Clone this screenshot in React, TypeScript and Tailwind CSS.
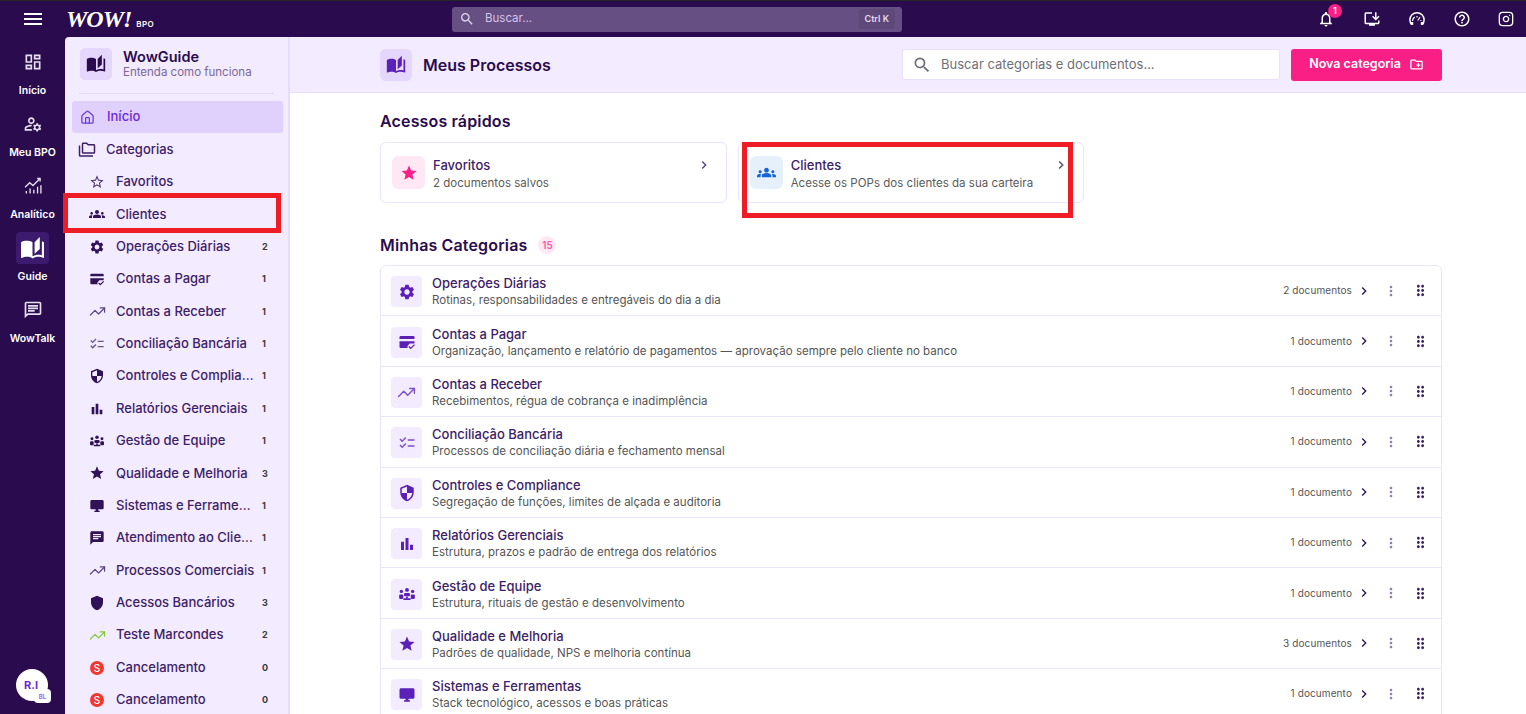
import React from "react";
import type { IconType } from "react-icons";
import {
  MdAutoStories,
  MdBarChart,
  MdChat,
  MdChevronRight,
  MdChecklist,
  MdDesktopWindows,
  MdDragIndicator,
  MdGroups,
  MdHelpOutline,
  MdMenu,
  MdMoreVert,
  MdOutlineChat,
  MdOutlineCreateNewFolder,
  MdOutlineDashboard,
  MdOutlineFolderCopy,
  MdOutlineInstallDesktop,
  MdOutlineManageAccounts,
  MdOutlineNotifications,
  MdSearch,
  MdSecurity,
  MdSettings,
  MdShield,
  MdStar,
  MdStarBorder,
} from "react-icons/md";
import { LuHouse, LuInstagram, LuTrendingUp } from "react-icons/lu";

type IconProps = { size?: number; className?: string };
type AnyIcon = IconType | ((p: IconProps) => React.ReactElement);

const font = { fontFamily: "Inter, 'Noto Sans', sans-serif" };

function CancelIcon() {
  return (
    <span className="flex h-[14px] w-[14px] items-center justify-center rounded-full bg-[#f4362c] text-[10px] leading-none font-medium text-white">
      S
    </span>
  );
}

// thin trend line, the md one is too heavy here
function ThinTrend({ size = 16, className }: IconProps) {
  return <LuTrendingUp size={size + 1} strokeWidth={1.7} className={className} />;
}

function CardCheckIcon({ size = 16, className }: IconProps) {
  return (
    <svg width={size} height={size} viewBox="0 0 24 24" fill="currentColor" className={className}>
      <path d="M3.5 4h17A1.5 1.5 0 0 1 22 5.5V8H2V5.5A1.5 1.5 0 0 1 3.5 4z" />
      <path d="M2 11h20v3h-6.5l-3 3.5L13 20H3.5A1.5 1.5 0 0 1 2 18.5z" />
      <path d="M14.5 18l2.5 2.5 5-5" fill="none" stroke="currentColor" strokeWidth="1.8" />
    </svg>
  );
}

function TeamIcon({ size = 16, className }: IconProps) {
  return (
    <svg width={size} height={size} viewBox="0 0 24 24" fill="currentColor" className={className}>
      <circle cx="12" cy="6.5" r="2.6" />
      <circle cx="4.5" cy="8.5" r="2.2" />
      <circle cx="19.5" cy="8.5" r="2.2" />
      <rect x="8" y="10.5" width="8" height="4.5" rx="1.8" />
      <circle cx="12" cy="16.8" r="1.4" />
      <rect x="1.5" y="12.5" width="5.5" height="6" rx="1.6" />
      <rect x="17" y="12.5" width="5.5" height="6" rx="1.6" />
      <rect x="7" y="17.5" width="10" height="2.5" rx="1" />
    </svg>
  );
}

function AnalyticIcon({ size = 20, className }: IconProps) {
  return (
    <svg width={size} height={size} viewBox="0 0 24 24" fill="none" stroke="currentColor" strokeWidth="1.6" className={className}>
      <path d="M2.5 13.5 8 8l4 3.5L20.5 3" />
      <path d="M17 3h3.5v3.5" />
      <path d="M4 21v-3M8.5 21v-6M13 21v-4.5M17.5 21v-8M21.5 21V11" />
    </svg>
  );
}

function GaugeIcon({ size = 18, className }: IconProps) {
  return (
    <svg width={size} height={size} viewBox="0 0 24 24" fill="none" stroke="currentColor" strokeWidth="2" className={className}>
      <path d="M5 19.5A10 10 0 0 1 2.5 13a9.5 9.5 0 0 1 19 0 10 10 0 0 1-2.5 6.5" />
      <path d="M6 14.5a6 6 0 0 1 3-5" strokeWidth="1.6" />
      <path d="M12 8v2M16 9.5l-1 1.5M18 14h-1.5M13 14l2-3" strokeWidth="1.6" />
      <rect x="3.5" y="16" width="3.5" height="4" rx="1" fill="currentColor" stroke="none" />
      <rect x="17" y="16" width="3.5" height="4" rx="1" fill="currentColor" stroke="none" />
    </svg>
  );
}

const railItems = [
  { label: "Início", icon: MdOutlineDashboard as AnyIcon },
  { label: "Meu BPO", icon: MdOutlineManageAccounts as AnyIcon },
  { label: "Analítico", icon: AnalyticIcon as AnyIcon },
  { label: "Guide", icon: MdAutoStories as AnyIcon, active: true },
  { label: "WowTalk", icon: MdOutlineChat as AnyIcon },
];

type SideItem = { label: string; icon: AnyIcon; count?: number; tone?: string };

const sideItems: SideItem[] = [
  { label: "Favoritos", icon: MdStarBorder, tone: "text-[#4b3570]" },
  { label: "Clientes", icon: MdGroups },
  { label: "Operações Diárias", icon: MdSettings, count: 2 },
  { label: "Contas a Pagar", icon: CardCheckIcon, count: 1 },
  { label: "Contas a Receber", icon: ThinTrend, count: 1, tone: "text-[#5a4580]" },
  { label: "Conciliação Bancária", icon: MdChecklist, count: 1, tone: "text-[#6a5590]" },
  { label: "Controles e Compliance", icon: MdSecurity, count: 1 },
  { label: "Relatórios Gerenciais", icon: MdBarChart, count: 1 },
  { label: "Gestão de Equipe", icon: TeamIcon, count: 1 },
  { label: "Qualidade e Melhoria", icon: MdStar, count: 3 },
  { label: "Sistemas e Ferramentas", icon: MdDesktopWindows, count: 1 },
  { label: "Atendimento ao Cliente", icon: MdChat, count: 1 },
  { label: "Processos Comerciais", icon: ThinTrend, count: 1, tone: "text-[#5a4580]" },
  { label: "Acessos Bancários", icon: MdShield, count: 3 },
  { label: "Teste Marcondes", icon: ThinTrend, count: 2, tone: "text-[#84cc3d]" },
  { label: "Cancelamento", icon: CancelIcon, count: 0 },
  { label: "Cancelamento", icon: CancelIcon, count: 0 },
];

const categories: { title: string; sub: string; docs: string; icon: AnyIcon; tone?: string }[] = [
  { title: "Operações Diárias", sub: "Rotinas, responsabilidades e entregáveis do dia a dia", docs: "2 documentos", icon: MdSettings },
  { title: "Contas a Pagar", sub: "Organização, lançamento e relatório de pagamentos — aprovação sempre pelo cliente no banco", docs: "1 documento", icon: CardCheckIcon },
  { title: "Contas a Receber", sub: "Recebimentos, régua de cobrança e inadimplência", docs: "1 documento", icon: ThinTrend, tone: "text-[#7c4fd0]" },
  { title: "Conciliação Bancária", sub: "Processos de conciliação diária e fechamento mensal", docs: "1 documento", icon: MdChecklist, tone: "text-[#7c4fd0]" },
  { title: "Controles e Compliance", sub: "Segregação de funções, limites de alçada e auditoria", docs: "1 documento", icon: MdSecurity },
  { title: "Relatórios Gerenciais", sub: "Estrutura, prazos e padrão de entrega dos relatórios", docs: "1 documento", icon: MdBarChart },
  { title: "Gestão de Equipe", sub: "Estrutura, rituais de gestão e desenvolvimento", docs: "1 documento", icon: TeamIcon },
  { title: "Qualidade e Melhoria", sub: "Padrões de qualidade, NPS e melhoria contínua", docs: "3 documentos", icon: MdStar },
  { title: "Sistemas e Ferramentas", sub: "Stack tecnológico, acessos e boas práticas", docs: "1 documento", icon: MdDesktopWindows },
];

function TopBar() {
  return (
    <header className="flex h-[37px] shrink-0 items-center border-t border-[#262626] bg-[#2a0c4e] text-white">
      <div className="flex w-[65px] justify-center">
        <MdMenu size={24} />
      </div>
      <div className="flex w-[387px] items-baseline pl-[1px]">
        <span className="text-[24px] leading-none font-bold tracking-[-1px] italic" style={{ fontFamily: "'Liberation Serif', serif" }}>
          WOW!
        </span>
        <span className="ml-[5px] text-[8px] font-semibold tracking-[0.4px]">BPO</span>
      </div>
      <div className="flex h-[25px] w-[450px] items-center rounded-[3px] bg-[#664f82] pr-[7px] pl-[7px]">
        <MdSearch size={16} className="text-[#e0d5ee]" />
        <span className="ml-[10px] flex-1 text-[11.5px] text-[#d5c3ee]">Buscar...</span>
        <span className="rounded-[3px] bg-[#5e4779] px-[6px] py-[3px] text-[9px] font-semibold text-[#e3d9ef]">Ctrl K</span>
      </div>
      <div className="ml-auto flex items-center gap-[27px] pr-[12px]">
        <div className="relative -translate-x-[1px]">
          <MdOutlineNotifications size={18} />
          <span className="absolute top-[-6px] left-[11px] flex h-[14px] w-[14px] items-center justify-center rounded-full bg-[#f91f85] text-[9px] font-semibold">
            1
          </span>
        </div>
        <MdOutlineInstallDesktop size={18} />
        <GaugeIcon size={18} />
        <MdHelpOutline size={18} />
        <LuInstagram size={16} />
      </div>
    </header>
  );
}

function Rail() {
  return (
    <nav className="relative flex w-[65px] shrink-0 flex-col items-center bg-[#2a0c4e] pt-[9px] text-white">
      {railItems.map((item) => {
        const Icon = item.icon;
        return (
          <div key={item.label} className="flex h-[62px] w-full shrink-0 flex-col items-center">
            <div className={`flex h-[32px] w-[33px] items-center justify-center rounded-[4px] ${item.active ? "bg-[#3c1a6e]" : ""}`}>
              <Icon size={item.active ? 25 : 20} className={item.active ? "text-white" : "text-[#e6e0ee]"} />
            </div>
            <span className="mt-[6px] text-[10.5px] leading-[14px] font-semibold">{item.label}</span>
          </div>
        );
      })}
      <div className="absolute bottom-[13px] left-[16px] flex h-[32px] w-[32px] items-center justify-center rounded-full bg-white pr-[2px]">
        <span className="text-[11px] font-bold text-[#6d28d9]">R.I</span>
        <span className="absolute right-[-3px] bottom-[-2px] flex h-[14px] w-[17px] items-center justify-center rounded-[4px] bg-white text-[6px] font-semibold text-[#8b5cf6]">
          BL
        </span>
      </div>
    </nav>
  );
}

function Sidebar() {
  return (
    <aside className="flex w-[225px] shrink-0 flex-col overflow-hidden rounded-tl-[4px] border-r-2 border-[#e6dcfb] bg-[#f3ebff] text-[#3d2166]">
      <div className="mx-[14px] flex h-[57px] shrink-0 items-center gap-[11px] border-b border-[#e4daf6] pt-[2px] pb-[4px] pl-[1px]">
        <div className="flex h-[32px] w-[32px] items-center justify-center rounded-[5px] bg-[#e4d6fc]">
          <MdAutoStories size={20} className="text-[#2a0c4e]" />
        </div>
        <div>
          <div className="text-[14.5px] leading-[17px] font-semibold text-[#2a0c4e]">WowGuide</div>
          <div className="text-[11.5px] leading-[15px] text-[#7a6896]">Entenda como funciona</div>
        </div>
      </div>
      <div className="mt-[7px] pr-[5px] pl-[7px]">
        <div className="flex h-[32.4px] items-center rounded-[3px] bg-[#e0d0fc] pl-[8px] text-[#6d28d9]">
          <LuHouse size={15} className="text-[#6d3bd0]" />
          <span className="ml-[12px] text-[13px] font-medium">Início</span>
        </div>
        <div className="flex h-[32.4px] items-center pl-[6px]">
          <MdOutlineFolderCopy size={18} />
          <span className="ml-[10px] text-[13px] font-medium">Categorias</span>
        </div>
        {sideItems.map((item, i) => {
          const Icon = item.icon;
          return (
            <div key={item.label + i} className="flex h-[32.375px] items-center">
              <div className={`flex w-[37px] justify-center pl-[13px] ${item.tone ?? "text-[#2f1257]"}`}>
                <Icon size={16} />
              </div>
              <span className="ml-[7px] w-[140px] truncate text-[13px] font-medium">{item.label}</span>
              {item.count !== undefined && <span className="ml-[6px] text-[9px] font-bold text-[#3a3a3a]">{item.count}</span>}
            </div>
          );
        })}
      </div>
    </aside>
  );
}

function QuickCard({ title, sub, tint, children }: { title: string; sub: string; tint: string; children: React.ReactNode }) {
  return (
    <div className="flex h-[61px] items-center rounded-[6px] border border-[#ece3fd] bg-white pr-[14px] pl-[11px]">
      <div className={`flex h-[33px] w-[33px] items-center justify-center rounded-[6px] ${tint}`}>{children}</div>
      <div className="ml-[8px] flex-1 pt-[4px]">
        <div className="text-[13px] leading-[17px] font-medium text-[#3d2166]">{title}</div>
        <div className="text-[11.5px] leading-[19px] tracking-[0.02px] text-[#5a5a5a]">{sub}</div>
      </div>
      <MdChevronRight size={16} className="mb-[15px] text-[#55427a]" />
    </div>
  );
}

function CategoryRow({ title, sub, docs, icon: Icon, tone }: { title: string; sub: string; docs: string; icon: AnyIcon; tone?: string }) {
  return (
    <div className="flex h-[50.4px] items-center border-b border-[#ece3fd] pt-[2px] pr-[12px] pl-[10px]">
      <div className="flex h-[31px] w-[31px] items-center justify-center rounded-[4px] bg-[#f3ebff]">
        <Icon size={18} className={tone ?? "text-[#5b21b6]"} />
      </div>
      <div className="ml-[10px] flex-1">
        <div className="text-[13px] leading-[17px] font-medium text-[#3d2166]">{title}</div>
        <div className="text-[11.5px] leading-[16px] tracking-[0.02px] text-[#555]">{sub}</div>
      </div>
      <span className="mb-[2px] text-[10px] tracking-[0.1px] text-[#555]">{docs}</span>
      <MdChevronRight size={16} className="mb-[2px] ml-[4px] text-[#2f1257]" />
      <MdMoreVert size={16} className="mb-[2px] ml-[11px] text-[#8d7fa8]" />
      <MdDragIndicator size={17} className="mb-[2px] ml-[13px] text-[#3d2166]" />
    </div>
  );
}

function Main() {
  return (
    <main className="flex min-w-0 flex-1 flex-col overflow-hidden bg-white">
      <div className="flex h-[56px] shrink-0 items-center border-b border-[#e8dffb] bg-[#f3ebff] pr-[84px] pl-[90px]">
        <div className="flex h-[32px] w-[32px] items-center justify-center rounded-[6px] bg-[#e4d6fc]">
          <MdAutoStories size={20} className="text-[#5b21b6]" />
        </div>
        <h1 className="ml-[11px] text-[16px] font-semibold text-[#2a0c4e]">Meus Processos</h1>
        <div className="ml-auto flex h-[31px] w-[378px] items-center rounded-[3px] border border-[#e9e0fb] bg-white pl-[9px]">
          <MdSearch size={20} className="text-[#6b6b7a]" />
          <span className="ml-[9px] text-[13px] text-[#6f6f76]">Buscar categorias e documentos...</span>
        </div>
        <button className="ml-[11px] flex h-[32px] w-[151px] items-center justify-center gap-[8px] rounded-[3px] bg-[#f91f85] text-[12.5px] font-semibold text-white">
          Nova categoria
          <MdOutlineCreateNewFolder size={15} />
        </button>
      </div>
      <div className="pr-[84px] pl-[90px]">
        <h2 className="mt-[17px] text-[16px] leading-[22px] font-semibold tracking-[0.15px] text-[#2a0c4e]">Acessos rápidos</h2>
        <div className="mt-[10px] grid grid-cols-3 gap-[11px]">
          <QuickCard title="Favoritos" sub="2 documentos salvos" tint="bg-[#ffe7f3]">
            <MdStar size={18} className="text-[#f91f85]" />
          </QuickCard>
          <QuickCard title="Clientes" sub="Acesse os POPs dos clientes da sua carteira" tint="bg-[#e6f0fb]">
            <MdGroups size={19} className="text-[#1565d8]" />
          </QuickCard>
        </div>
        <div className="mt-[31px] flex items-center">
          <h2 className="text-[16px] leading-[22px] font-semibold tracking-[0.15px] text-[#2a0c4e]">Minhas Categorias</h2>
          <span className="ml-[11px] flex h-[18px] w-[18px] items-center justify-center rounded-full bg-[#ffe7f3] text-[10px] font-semibold text-[#f95ba5]">15</span>
        </div>
        <div className="mt-[9px] rounded-t-[6px] border border-[#ece3fd]">
          {categories.map((c) => (
            <CategoryRow key={c.title} {...c} />
          ))}
        </div>
      </div>
    </main>
  );
}

export default function App() {
  return (
    <div className="relative flex h-screen flex-col overflow-hidden bg-[#2a0c4e]" style={font}>
      <TopBar />
      <div className="flex min-h-0 flex-1">
        <Rail />
        <Sidebar />
        <Main />
      </div>
      {/* annotation boxes drawn over the screenshot */}
      <div className="absolute top-[193px] left-[63px] h-[40px] w-[218px] border-[5px] border-[#ee1c25]" />
      <div className="absolute top-[142px] left-[742px] h-[76px] w-[331px] border-[5px] border-[#ee1c25]" />
    </div>
  );
}
